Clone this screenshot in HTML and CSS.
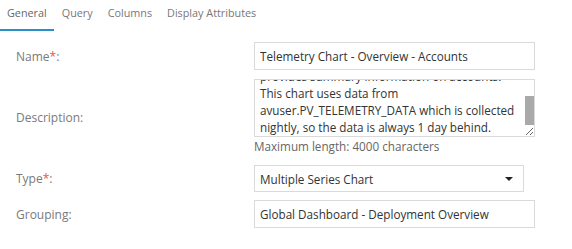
FILE: index.html
```html
<!DOCTYPE html>
<html lang="en">
<head>
  <meta charset="UTF-8">
  <title>Chart Properties</title>
  <link rel="stylesheet" href="styles.css">
</head>
<body>
  <nav class="tabs">
    <a class="tab active">General</a>
    <a class="tab">Query</a>
    <a class="tab">Columns</a>
    <a class="tab">Display Attributes</a>
  </nav>

  <form class="form">
    <div class="row row-name">
      <label for="name">Name<span class="req">*</span>:</label>
      <input type="text" id="name" value="Telemetry Chart - Overview - Accounts">
    </div>
    <div class="row row-desc">
      <label for="desc">Description:</label>
      <div class="field">
        <div class="textarea-wrap">
          <textarea id="desc">The Telemetry Chart - Overview - Accounts chart
provides summary information on accounts.
This chart uses data from avuser.PV_TELEMETRY_DATA which is collected nightly, so the data is always 1 day behind.</textarea>
          <span class="scroll-thumb"></span>
        </div>
        <div class="hint">Maximum length: 4000 characters</div>
      </div>
    </div>
    <div class="row row-type">
      <label for="type">Type<span class="req">*</span>:</label>
      <div class="select" id="type">
        <span>Multiple Series Chart</span>
        <span class="caret"></span>
      </div>
    </div>
    <div class="row row-group">
      <label for="grouping">Grouping:</label>
      <input type="text" id="grouping" value="Global Dashboard - Deployment Overview">
    </div>
  </form>

  <script>
    // show the end of the description, as the saved form does
    const desc = document.getElementById('desc');
    desc.scrollTop = desc.scrollHeight;
  </script>
</body>
</html>
```

FILE: styles.css
```css
body {
  margin: 0;
  font-family: 'Open Sans', 'Liberation Sans', Arial, sans-serif;
  font-size: 11.7px;
  color: #333;
  background: #fff;
}
.tabs {
  display: flex;
  gap: 1px;
}
.tab {
  padding: 4px 7px 7px;
  line-height: 18px;
  font-size: 10.8px;
  color: #777;
  border-bottom: 2px solid transparent;
}
.tab.active {
  color: #666;
  border-bottom-color: #2a8fc4;
}
.form {
  display: flex;
  flex-direction: column;
  padding-top: 11px;
}
.row {
  display: grid;
  grid-template-columns: 254px 281px;
  align-items: center;
}
.row label {
  padding-left: 16px;
  font-size: 12px;
  color: #7a7a7a;
}
.req {
  color: #f0503c;
}
input[type="text"] {
  box-sizing: border-box;
  height: 28px;
  width: 100%;
  margin: 0;
  padding: 0 5px;
  border: 1px solid #dadada;
  font: inherit;
  color: #333;
  outline: none;
}
.row-desc {
  margin-top: 9px;
}
.textarea-wrap {
  position: relative;
}
textarea {
  display: block;
  box-sizing: border-box;
  width: 100%;
  height: 58px;
  margin: 0;
  padding: 0 16px 0 5px;
  border: 1px solid #dadada;
  font: inherit;
  line-height: 17px;
  color: #333;
  resize: vertical;
  outline: none;
}
/* scrollbar thumb drawn over the textarea */
.scroll-thumb {
  position: absolute;
  top: 17px;
  right: 1px;
  width: 9px;
  height: 29px;
  background: #a9a9a9;
}
.hint {
  line-height: 18px;
  color: #666;
}
.row-type {
  margin-top: 10px;
}
.select {
  box-sizing: border-box;
  width: 270px;
  height: 27px;
  padding: 0 5px;
  border: 1px solid #dadada;
  display: flex;
  align-items: center;
  justify-content: space-between;
}
.caret {
  width: 0;
  height: 0;
  margin-right: 5px;
  border-left: 4px solid transparent;
  border-right: 4px solid transparent;
  border-top: 4px solid #222;
}
.row-group {
  margin-top: 8px;
}
```
